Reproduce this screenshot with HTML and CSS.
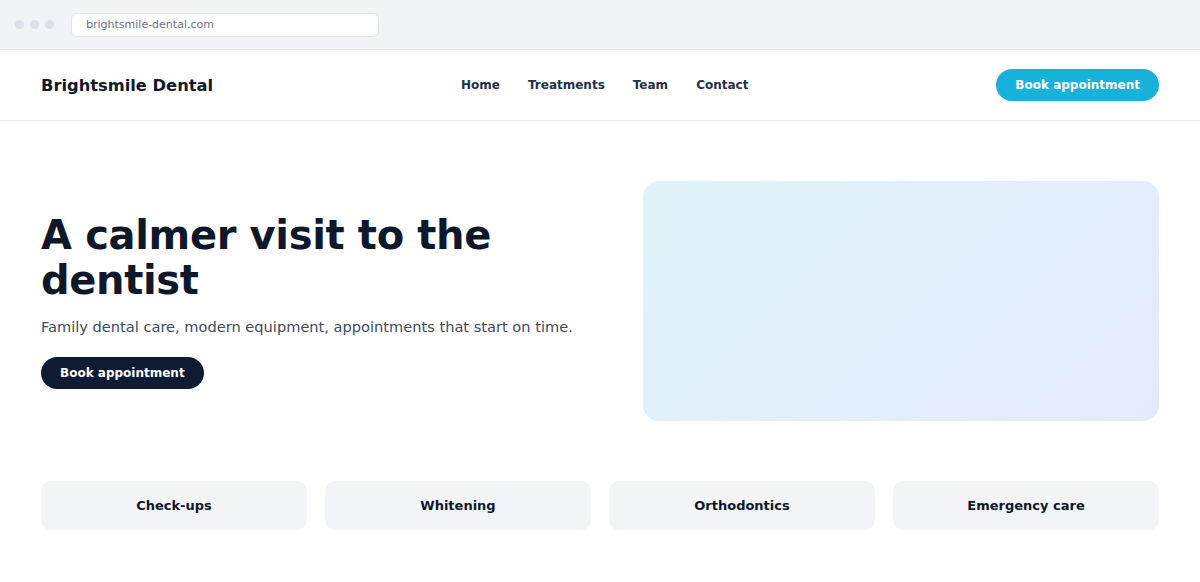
FILE: index.html
```html
<!DOCTYPE html>
<html lang="en">
<head>
<meta charset="utf-8">
<title>Brightsmile Dental</title>
<link rel="stylesheet" href="styles.css">
</head>
<body>
<div class="chrome">
  <div class="dots"><span class="dot"></span><span class="dot"></span><span class="dot"></span></div>
  <div class="url">brightsmile-dental.com</div>
</div>
<header class="site-header">
  <div class="logo">Brightsmile Dental</div>
  <nav class="nav">
    <a href="#">Home</a>
    <a href="#">Treatments</a>
    <a href="#">Team</a>
    <a href="#">Contact</a>
  </nav>
  <a class="btn btn-cyan" href="#">Book appointment</a>
</header>
<main class="main">
  <section class="hero">
    <div class="hero-text">
      <h1 class="hero-title">A calmer visit to the dentist</h1>
      <p class="hero-sub">Family dental care, modern equipment, appointments that start on time.</p>
      <a class="btn btn-dark" href="#">Book appointment</a>
    </div>
    <div class="hero-media"></div>
  </section>
  <section class="services">
    <div class="card">Check-ups</div>
    <div class="card">Whitening</div>
    <div class="card">Orthodontics</div>
    <div class="card">Emergency care</div>
  </section>
</main>
</body>
</html>
```
FILE: styles.css
```css
* { box-sizing: border-box; }
html, body { margin: 0; padding: 0; }
body {
  font-family: "DejaVu Sans", sans-serif;
  color: #0f172a;
  background: #ffffff;
  width: 1200px;
  height: 582px;
  overflow: hidden;
}
a { text-decoration: none; color: inherit; }

.chrome {
  height: 50px;
  background: #f1f3f7;
  border-bottom: 1px solid #e3e6ec;
  display: flex;
  align-items: center;
  padding: 0 0 0 15px;
  gap: 17px;
}
.dots { display: flex; gap: 6px; }
.dot { width: 9px; height: 9px; border-radius: 50%; background: #dcdfe5; }
.url {
  width: 308px;
  height: 24px;
  background: #fff;
  border: 1px solid #e1e4ea;
  border-radius: 6px;
  font-size: 11px;
  color: #6b7280;
  display: flex;
  align-items: center;
  padding-left: 14px;
}

.site-header {
  height: 71px;
  border-bottom: 1px solid #e8ebf0;
  display: flex;
  align-items: center;
  justify-content: space-between;
  padding: 0 41px;
}
.logo { font-weight: 700; font-size: 16.3px; color: #0f172a; }
.nav { display: flex; gap: 28px; font-size: 12px; font-weight: 700; color: #253047; }

.btn {
  display: inline-flex;
  align-items: center;
  height: 32px;
  padding: 0 19px;
  border-radius: 16px;
  font-size: 12px;
  font-weight: 700;
  color: #fff;
}
.btn-cyan { background: #17b2d9; }
.btn-dark { background: #0f1b33; }

.main { padding: 60px 41px 0; }
.hero {
  display: grid;
  grid-template-columns: 1fr 516px;
  gap: 48px;
  align-items: center;
}
.hero-title {
  margin: 0 0 14px;
  font-size: 40px;
  line-height: 45px;
  font-weight: 700;
  letter-spacing: -0.35px;
  color: #0f172a;
}
.hero-sub {
  margin: 0 0 20px;
  font-size: 14.6px;
  line-height: 20px;
  color: #3f4a5c;
}
.hero-media {
  height: 240px;
  border-radius: 16px;
  background: linear-gradient(135deg, #dff3fa 0%, #e1eefa 50%, #e4eafc 100%);
}

.services {
  margin-top: 60px;
  display: grid;
  grid-template-columns: repeat(4, 1fr);
  gap: 18px;
}
.card {
  height: 49px;
  border-radius: 10px;
  background: #f2f4f8;
  display: flex;
  align-items: center;
  justify-content: center;
  font-size: 13px;
  font-weight: 700;
  color: #0f172a;
}
```
